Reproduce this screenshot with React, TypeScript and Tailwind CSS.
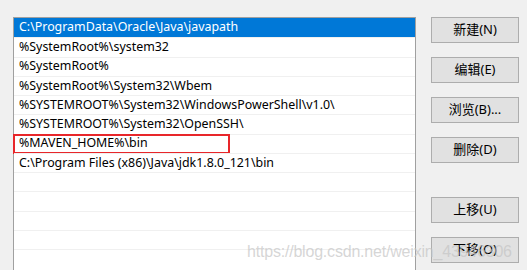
import React from "react";

const paths = [
  "C:\\ProgramData\\Oracle\\Java\\javapath",
  "%SystemRoot%\\system32",
  "%SystemRoot%",
  "%SystemRoot%\\System32\\Wbem",
  "%SYSTEMROOT%\\System32\\WindowsPowerShell\\v1.0\\",
  "%SYSTEMROOT%\\System32\\OpenSSH\\",
  "%MAVEN_HOME%\\bin",
  "C:\\Program Files (x86)\\Java\\jdk1.8.0_121\\bin",
];

const rows = [...paths, "", "", "", "", ""];

const buttons = [
  { label: "新建(N)", gap: "mt-[17px]" },
  { label: "编辑(E)", gap: "mt-[14px]" },
  { label: "浏览(B)...", gap: "mt-[14px]" },
  { label: "删除(D)", gap: "mt-[14px]" },
  { label: "上移(U)", gap: "mt-[34px]" },
  { label: "下移(O)", gap: "mt-[14px]" },
];

const App = () => {
  return (
    <div className="relative flex h-[270px] w-[527px] overflow-hidden bg-[#f0f0f0] font-['Noto_Sans','Noto_Sans_CJK_SC',sans-serif]">
      <div className="ml-[13px] mt-[17px] h-[260px] w-[403px] shrink-0 border border-[#a0a0a0] bg-white">
        {rows.map((row, i) => (
          <div
            key={i}
            className={
              i === 0
                ? "relative flex h-[19.25px] items-center bg-[#0078d7] pl-[5px] text-[12.4px] text-white"
                : "relative flex h-[19.25px] items-center border-t border-[#f0f0f0] pl-[5px] text-[12.4px] text-black"
            }
          >
            <span className="whitespace-nowrap leading-none">{row}</span>
            {i === 6 && (
              <div className="absolute left-[-1px] top-[-1px] h-[20px] w-[217px] border-2 border-[#e8262a]" />
            )}
          </div>
        ))}
      </div>
      <div className="ml-[15px] flex flex-col">
        {buttons.map(({ label, gap }) => (
          <button
            key={label}
            className={`${gap} flex h-[26px] w-[88px] items-center justify-center border border-[#adadad] bg-[#e1e1e1] text-[13px] text-black`}
          >
            {label}
          </button>
        ))}
      </div>
      <div className="pointer-events-none absolute left-[247px] top-[240px] whitespace-nowrap font-['Liberation_Sans',sans-serif] text-[16px] tracking-[-0.2px] text-[#c4c4c4]/70">
        https://blog.csdn.net/weixin_43946306
      </div>
    </div>
  );
};

export default App;
